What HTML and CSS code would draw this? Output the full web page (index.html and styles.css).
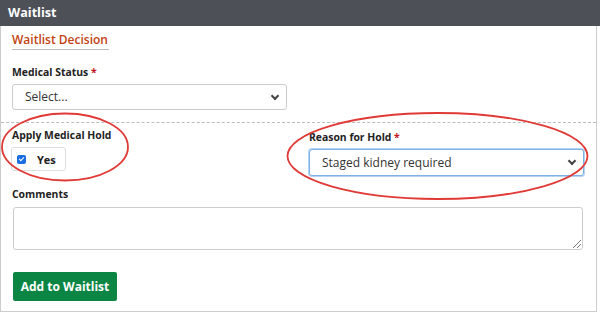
FILE: index.html
```html
<!DOCTYPE html>
<html lang="en">
<head>
  <meta charset="UTF-8">
  <title>Waitlist</title>
  <link rel="stylesheet" href="styles.css">
</head>
<body>

<div class="panel">
  <div class="panel-head">Waitlist</div>
  <div class="panel-body">
    <div class="section-title">Waitlist Decision</div>

    <div class="field status">
      <label>Medical Status <span class="req">*</span></label>
      <div class="select half">Select...<span class="caret"></span></div>
    </div>
  </div>

  <div class="divider"></div>

  <div class="panel-body">
    <div class="two-col">
      <div class="field hold">
        <label>Apply Medical Hold</label>
        <div class="check-box"><span class="check"></span>Yes</div>
      </div>
      <div class="field reason">
        <label>Reason for Hold <span class="req">*</span></label>
        <div class="select focused">Staged kidney required<span class="caret"></span></div>
      </div>
    </div>

    <div class="field comments">
      <label>Comments</label>
      <div class="textarea"><span class="grip"></span></div>
    </div>

    <button class="btn-green">Add to Waitlist</button>
  </div>

  <svg class="marks" width="600" height="312" viewBox="0 0 600 312">
    <ellipse cx="65" cy="147" rx="63" ry="33.5" />
    <ellipse cx="437.5" cy="156" rx="150" ry="43" />
  </svg>
</div>

</body>
</html>
```
FILE: styles.css
```css
* { box-sizing: border-box; }
body {
  margin: 0;
  font-family: 'Open Sans', sans-serif;
  color: #222;
  background: #fff;
}
.panel {
  position: relative;
  width: 597px;
  height: 312px;
  border: 1px solid #ccc;
  border-top: none;
}
.panel-head {
  height: 26px;
  margin: 0 -1px;
  width: 600px;
  background: #4d5157;
  color: #fff;
  font-weight: 700;
  font-size: 12.6px;
  line-height: 26px;
  padding-left: 8px;
}
.panel-body {
  padding: 0 13px 0 11px;
}
.section-title {
  display: inline-block;
  margin-top: 5px;
  color: #c2410f;
  font-size: 12px;
  font-weight: 600;
  line-height: 18px;
  height: 19px;
  padding-right: 1px;
  border-bottom: 1px solid #bbb;
}
.field {
  display: flex;
  flex-direction: column;
}
.field label {
  font-size: 10.4px;
  font-weight: 700;
  line-height: 14px;
  margin-bottom: 5px;
}
.field.status label { margin-top: 15px; }
.req { color: #c0161d; }
.select {
  position: relative;
  height: 26px;
  border: 1px solid #ccc;
  border-radius: 3px;
  font-size: 12px;
  line-height: 24px;
  padding-left: 12px;
  color: #333;
  background: #fff;
}
.select.half { width: 275px; }
.select.focused {
  height: 27px;
  line-height: 25px;
  border-color: #7fb1e6;
  box-shadow: 0 0 0 1px #b7d3f3;
}
.caret {
  position: absolute;
  right: 8px;
  top: 8px;
  width: 6px;
  height: 6px;
  border-right: 2px solid #444;
  border-bottom: 2px solid #444;
  transform: rotate(45deg);
}
.divider {
  margin-top: 12px;
  border-top: 1px dashed #bbb;
}
.two-col {
  display: grid;
  grid-template-columns: 275px 275px;
  column-gap: 22px;
}
.field.hold label { margin-top: 5px; }
.field.reason label { margin-top: 7px; }
.check-box {
  display: flex;
  align-items: center;
  width: 55px;
  height: 24px;
  margin-left: -1px;
  border: 1px solid #ddd;
  border-radius: 3px;
  font-size: 11px;
  font-weight: 700;
  padding-left: 5px;
}
.check {
  position: relative;
  width: 9px;
  height: 9px;
  background: #1a6ee0;
  border-radius: 2px;
  margin-right: 11px;
}
.check::after {
  content: "";
  position: absolute;
  left: 3px;
  top: 1px;
  width: 2px;
  height: 4px;
  border-right: 1.5px solid #fff;
  border-bottom: 1.5px solid #fff;
  transform: rotate(45deg);
}
.field.comments label { margin-top: 11px; margin-bottom: 6px; }
.textarea {
  position: relative;
  height: 43px;
  border: 1px solid #ccc;
  border-radius: 3px;
  margin-left: 1px;
}
.grip {
  position: absolute;
  right: 1px;
  bottom: 1px;
  width: 8px;
  height: 8px;
  background: linear-gradient(135deg, transparent 45%, #777 45%, #777 52%, transparent 52%, transparent 72%, #777 72%, #777 80%, transparent 80%);
}
.btn-green {
  margin-top: 22px;
  margin-left: 1px;
  width: 104px;
  height: 29px;
  border: none;
  border-radius: 2px;
  background: #0b8544;
  color: #fff;
  font-family: 'Open Sans', sans-serif;
  font-weight: 700;
  font-size: 12px;
  padding: 0;
}
.marks {
  position: absolute;
  left: -1px;
  top: 0;
  pointer-events: none;
}
.marks ellipse {
  fill: none;
  stroke: #e03a36;
  stroke-width: 1.8;
}
```
